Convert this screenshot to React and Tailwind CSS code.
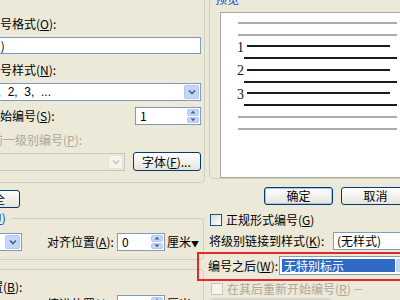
import React from 'react';

// XP style pieces
const U = ({ k }) => (
  <span>
    (<span className="underline">{k}</span>)
  </span>
);

function DropBtn({ disabled }) {
  return (
    <div
      className={
        disabled
          ? 'w-[15px] h-full shrink-0 flex items-center justify-center rounded-[2px] bg-[#F5F4EF] border border-[#E3E1D8]'
          : 'w-[15px] h-full shrink-0 flex items-center justify-center rounded-[2px] bg-[#C5D6FC] border border-[#B4C8F4]'
      }
    >
      <svg width="8" height="6" viewBox="0 0 8 6">
        <path d="M1 1.5 L4 4.5 L7 1.5" fill="none" stroke={disabled ? '#C9C7BA' : '#4D6185'} strokeWidth="1.7" />
      </svg>
    </div>
  );
}

function SpinBtns() {
  return (
    <div className="w-[12px] h-full shrink-0 flex flex-col gap-px">
      <div className="flex-1 flex items-center justify-center rounded-[2px] bg-[#C5D6FC] border border-[#B4C8F4]">
        <svg width="6" height="4" viewBox="0 0 6 4"><path d="M0.5 3.5 L3 0.8 L5.5 3.5 Z" fill="#4D6185" /></svg>
      </div>
      <div className="flex-1 flex items-center justify-center rounded-[2px] bg-[#C5D6FC] border border-[#B4C8F4]">
        <svg width="6" height="4" viewBox="0 0 6 4"><path d="M0.5 0.5 L3 3.2 L5.5 0.5 Z" fill="#4D6185" /></svg>
      </div>
    </div>
  );
}

function Spinner({ value, className }) {
  return (
    <div className={`h-[18px] bg-white border border-[#7F9DB9] flex items-stretch p-px ${className}`}>
      <div className="flex-1 pl-[3px] leading-[14px]">{value}</div>
      <SpinBtns />
    </div>
  );
}

function Button({ children, className, primary }) {
  return (
    <div
      className={`h-[18px] shrink-0 flex items-center justify-center rounded-[3px] border border-[#003C74] bg-gradient-to-b from-white to-[#E6E4DA] ${
        primary ? 'shadow-[inset_0_0_0_1px_#A9C3F0]' : ''
      } ${className}`}
    >
      {children}
    </div>
  );
}

function Preview() {
  const grey = '#ABABAB';
  const black = '#1B1B1B';
  return (
    <svg width="180" height="166" viewBox="0 0 180 166" className="block">
      <line x1="17" y1="10" x2="176" y2="10" stroke={grey} strokeWidth="2" />
      <line x1="17" y1="22" x2="176" y2="22" stroke={grey} strokeWidth="2" />
      <text x="16" y="39" fontSize="14" fontFamily="Liberation Serif, serif" fill="#111">1</text>
      <line x1="26" y1="33" x2="169" y2="33" stroke={black} strokeWidth="2" />
      <line x1="23" y1="45" x2="176" y2="45" stroke={black} strokeWidth="2" />
      <text x="16" y="62" fontSize="14" fontFamily="Liberation Serif, serif" fill="#111">2</text>
      <line x1="26" y1="57" x2="169" y2="57" stroke={black} strokeWidth="2" />
      <line x1="23" y1="69" x2="176" y2="69" stroke={black} strokeWidth="2" />
      <text x="16" y="86" fontSize="14" fontFamily="Liberation Serif, serif" fill="#111">3</text>
      <line x1="26" y1="80" x2="169" y2="80" stroke={black} strokeWidth="2" />
      <line x1="23" y1="92" x2="176" y2="92" stroke={black} strokeWidth="2" />
      <line x1="17" y1="104" x2="176" y2="104" stroke={grey} strokeWidth="2" />
      <line x1="17" y1="116" x2="176" y2="116" stroke={grey} strokeWidth="2" />
    </svg>
  );
}

export default function App() {
  return (
    <div className="relative w-[400px] h-[300px] overflow-hidden bg-[#ECE9D8] text-[12px] text-black font-['Noto_Sans_CJK_SC','Liberation_Sans',sans-serif] flex">
      {/* left column */}
      <div className="w-[206px] shrink-0 flex flex-col">
        <div className="h-[183px] w-[205px] shrink-0 border-r border-b border-[#D0D0BF] rounded-br-[5px] flex flex-col">
          <div className="mt-[17px] h-[14px] leading-[14px] ml-[-12px] whitespace-nowrap">编号格式<U k="O" />:</div>
          <div className="mt-[6px] h-[17px] ml-[-10px] w-[211px] shrink-0 bg-white border border-[#7F9DB9] leading-[15px] pl-[3px]">1)</div>
          <div className="mt-[9px] h-[14px] leading-[14px] ml-[-12px] whitespace-nowrap">编号样式<U k="N" />:</div>
          <div className="mt-[6px] h-[18px] ml-[-12px] w-[213px] shrink-0 bg-white border border-[#7F9DB9] flex p-px">
            <div className="flex-1 leading-[14px] pl-[1px] whitespace-pre font-['Liberation_Sans',sans-serif]">1,  2,  3,  ...</div>
            <DropBtn />
          </div>
          <div className="mt-[6px] h-[18px] flex items-center">
            <div className="ml-[-12px] w-[147px] whitespace-nowrap">起始编号<U k="S" />:</div>
            <Spinner value="1" className="w-[66px]" />
          </div>
          <div className="mt-[8px] h-[14px] leading-[14px] ml-[-9px] whitespace-nowrap text-[#ACA899]">前一级别编号<U k="P" />:</div>
          <div className="mt-[5px] h-[19px] flex items-center">
            <div className="ml-[-10px] w-[135px] h-[18px] border border-[#C9C7BA] flex p-px">
              <div className="flex-1" />
              <DropBtn disabled />
            </div>
            <Button className="ml-[8px] w-[68px] h-[19px] justify-start pl-[8px]">
              <span className="whitespace-nowrap">字体<U k="F" />...</span>
            </Button>
          </div>
        </div>

        <Button className="mt-[7px] ml-[-50px] w-[70px] justify-end pr-[14px]">
          <span className="whitespace-nowrap">更少(L) 全</span>
        </Button>

        {/* 编号位置 */}
        <div className="mt-[4px] h-[12px] flex items-center w-[204px]">
          <span className="ml-[-59px] text-[#0046D5] whitespace-nowrap leading-[12px]">编号位置<U k="U" /></span>
          <div className="flex-1 self-end h-[6px] ml-[5px] border-t border-r border-[#D0D0BF] rounded-tr-[4px]" />
        </div>
        <div className="w-[204px] border-r border-b border-[#D0D0BF] rounded-br-[4px] pt-[9px] pb-[8px]">
          <div className="h-[18px] flex items-center">
            <div className="ml-[-60px] w-[82px] h-[18px] bg-white border border-[#7F9DB9] flex p-px">
              <div className="flex-1" />
              <DropBtn />
            </div>
            <div className="ml-[25px] w-[70px] whitespace-nowrap">对齐位置<U k="A" />:</div>
            <Spinner value="0" className="w-[48px]" />
            <div className="ml-[2px] whitespace-nowrap">厘米<span className="text-[8px]">▼</span></div>
          </div>
        </div>

        {/* 文字位置 */}
        <div className="mt-[9px] w-[204px] flex-1 border-t border-r border-[#D0D0BF] rounded-tr-[4px]">
          <div className="mt-[10px] h-[14px] leading-[14px] ml-[-57px] whitespace-nowrap">制表位位置<U k="B" />:</div>
          <div className="mt-[1px] h-[18px] flex items-center">
            <div className="ml-[47px] w-[70px] whitespace-nowrap">缩进位置<U k="I" />:</div>
            <Spinner value="0.75" className="w-[48px]" />
            <div className="ml-[2px] whitespace-nowrap">厘米</div>
          </div>
        </div>
      </div>

      {/* right column */}
      <div className="flex-1 flex flex-col">
        <div className="h-[182px] ml-[3px] border-l border-b border-[#D0D0BF] rounded-bl-[5px] flex flex-col">
          <div className="mt-[-7px] h-[12px] leading-[12px] ml-[5px] text-[#0046D5] whitespace-nowrap">预览</div>
          <div className="mt-[7px] ml-[10px] w-[182px] h-[166px] bg-white border border-[#ACA899]">
            <Preview />
          </div>
        </div>

        <div className="mt-[8px] flex">
          <Button primary className="ml-[58px] w-[69px]">确定</Button>
          <Button className="ml-[8px] w-[69px]">取消</Button>
        </div>

        <div className="mt-[9px] h-[12px] flex items-center">
          <div className="ml-[4px] w-[12px] h-[12px] shrink-0 border border-[#1C5180] bg-gradient-to-br from-[#DCDCD7] to-white" />
          <div className="ml-[4px] whitespace-nowrap">正规形式编号<U k="G" /></div>
        </div>

        <div className="mt-[6px] h-[18px] flex items-center">
          <div className="ml-[3px] w-[124px] whitespace-nowrap">将级别链接到样式<U k="K" />:</div>
          <div className="w-[90px] shrink-0 h-[18px] bg-white border border-[#7F9DB9] flex p-px">
            <div className="flex-1 pl-[2px] leading-[14px] whitespace-nowrap">(无样式)</div>
            <DropBtn />
          </div>
        </div>

        <div className="mt-[6px] h-[19px] flex items-center">
          <div className="ml-[2px] w-[71px] whitespace-nowrap">编号之后<U k="W" />:</div>
          <div className="w-[134px] shrink-0 h-[19px] bg-white border border-[#7F9DB9] flex gap-px p-[2px] pr-px">
            <div className="w-[113px] bg-[#316AC5] text-white leading-[13px] pl-[2px] whitespace-nowrap">无特别标示</div>
            <DropBtn />
          </div>
        </div>

        <div className="mt-[8px] h-[12px] flex items-center text-[#ACA899]">
          <div className="ml-[5px] w-[12px] h-[12px] shrink-0 border border-[#CAC8BB] bg-[#F4F3EE]" />
          <div className="ml-[4px] whitespace-nowrap">在其后重新开始编号<U k="R" /></div>
          <div className="ml-[3px] w-[8px] h-px bg-[#B9B7AB]" />
        </div>
        <div className="mt-[3px] ml-[5px] w-[120px] h-[6px] bg-[#D9D7CD]" />
      </div>

      {/* red highlight annotation */}
      <div className="absolute left-[197px] top-[252px] w-[214px] h-[29px] border-2 border-[#E5262C]" />
    </div>
  );
}
